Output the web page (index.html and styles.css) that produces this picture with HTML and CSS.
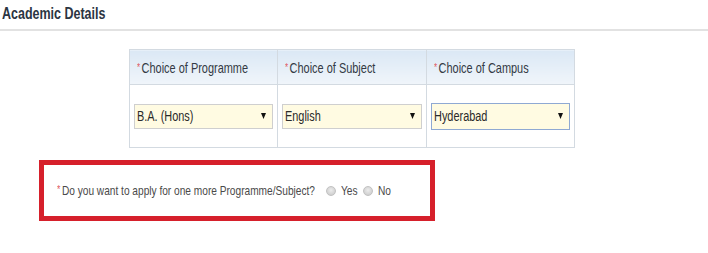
FILE: index.html
```html
<!DOCTYPE html>
<html>
<head>
<meta charset="utf-8">
<link rel="stylesheet" href="styles.css">
</head>
<body>
<div class="section-title"><span class="sq">Academic Details</span></div>
<div class="content">
  <table class="choices">
    <thead>
      <tr>
        <th><span class="sq sq-narrow"><span class="req">*</span>Choice of Programme</span></th>
        <th><span class="sq sq-narrow"><span class="req">*</span>Choice of Subject</span></th>
        <th><span class="sq sq-narrow"><span class="req">*</span>Choice of Campus</span></th>
      </tr>
    </thead>
    <tbody>
      <tr>
        <td><div class="select"><span class="sq">B.A. (Hons)</span><svg class="arrow" width="5" height="6" viewBox="0 0 5 6"><path d="M0 0H5L2.5 6Z" fill="#111"/></svg></div></td>
        <td><div class="select"><span class="sq">English</span><svg class="arrow" width="5" height="6" viewBox="0 0 5 6"><path d="M0 0H5L2.5 6Z" fill="#111"/></svg></div></td>
        <td><div class="select focused"><span class="sq">Hyderabad</span><svg class="arrow" width="5" height="6" viewBox="0 0 5 6"><path d="M0 0H5L2.5 6Z" fill="#111"/></svg></div></td>
      </tr>
    </tbody>
  </table>
  <div class="highlight">
    <div class="question"><span class="sq"><span class="req">*</span>Do you want to apply for one more Programme/Subject?</span></div>
    <label class="opt"><span class="radio"></span><span class="sq">Yes</span></label>
    <label class="opt"><span class="radio"></span><span class="sq">No</span></label>
  </div>
</div>
</body>
</html>
```
FILE: styles.css
```css
html, body {
  margin: 0;
  padding: 0;
  background: #ffffff;
}
body {
  font-family: "Liberation Sans", Arial, sans-serif;
  color: #333;
}
.sq {
  display: inline-block;
  white-space: nowrap;
  transform: scaleX(0.78);
  transform-origin: 0 50%;
}
.sq-narrow {
  transform: scaleX(0.73);
}
.section-title {
  font-weight: bold;
  font-size: 16px;
  line-height: 19px;
  color: #2b3542;
  padding: 4px 0 0 2px;
  height: 25px;
  border-bottom: 2px solid #e2e2e2;
}
.content {
  padding-top: 18px;
}
.choices {
  margin-left: 129px;
  width: 446px;
  border-collapse: collapse;
  table-layout: fixed;
}
.choices th, .choices td {
  border: 1px solid #d3dae1;
}
.choices th {
  height: 34px;
  padding: 0 0 0 7px;
  text-align: left;
  font-weight: normal;
  font-size: 15px;
  color: #333a44;
  background: linear-gradient(#dbe8f5, #f0f5fa);
}
.choices td {
  height: 62px;
  padding: 0 4px;
}
.req {
  color: #e0545c;
  font-size: 11px;
  vertical-align: 2px;
  margin-right: 2px;
}
.select {
  display: flex;
  align-items: center;
  justify-content: space-between;
  height: 23px;
  padding: 0 6px 0 2px;
  background: #fffbe2;
  border: 1px solid #cfcfcf;
  font-size: 14px;
  color: #2a2a2a;
  overflow: hidden;
}
.select .sq {
  flex: 1;
}
.select.focused {
  border-color: #8fa9d3;
  height: 25px;
}
.highlight {
  margin: 12px 0 0 39px;
  width: 373px;
  height: 51px;
  border: 5px solid #d6202b;
  display: flex;
  align-items: center;
  padding-left: 13px;
  box-sizing: content-box;
  font-size: 13px;
  color: #4a4a4a;
}
.highlight .question {
  width: 269px;
  flex: none;
}
.highlight .req {
  font-size: 11px;
}
.opt {
  display: inline-flex;
  align-items: center;
  width: 37px;
  flex: none;
}
.radio {
  display: inline-block;
  flex: none;
  width: 8px;
  height: 8px;
  border-radius: 50%;
  border: 1px solid #c2c2c2;
  background: radial-gradient(circle at 50% 40%, #ececec, #c6c6c6);
  margin-right: 5px;
}
```
